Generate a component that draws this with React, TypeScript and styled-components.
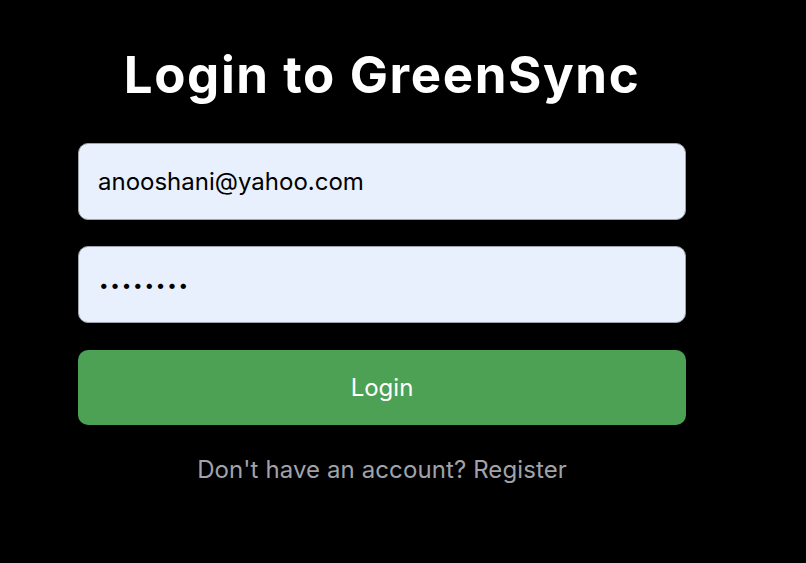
import React from 'react';
import styled, { createGlobalStyle } from 'styled-components';

const GlobalStyle = createGlobalStyle`
    html, body {
        margin: 0;
        padding: 0;
        background-color: #000000;
    }

    body {
        font-family: Inter, 'Liberation Sans', Arial, sans-serif;
    }
`;

const Page = styled.div`
    width: 806px;
    height: 563px;
    box-sizing: border-box;
    padding: 44px 0 0 78px;
    background-color: #000000;
`;

const Form = styled.form`
    width: 608px;
    display: flex;
    flex-direction: column;
    align-items: stretch;
`;

const Title = styled.h1`
    margin: 0 0 37px 0;
    text-align: center;
    color: #ffffff;
    font-size: 51px;
    font-weight: 700;
    line-height: 62px;
    letter-spacing: 1.6px;
`;

const Field = styled.input`
    height: 77px;
    margin-bottom: 26px;
    padding: 0 19px;
    box-sizing: border-box;
    border: 1px solid #9ea3ab;
    border-radius: 10px;
    background-color: #e8f0fe;
    color: #000000;
    font-family: inherit;
    font-size: 24px;
    outline: none;

    &[type='password'] {
        padding-left: 20px;
        font-size: 17px;
        letter-spacing: 1.8px;
    }
`;

const Submit = styled.button`
    height: 75px;
    margin-top: 1px;
    border: none;
    border-radius: 10px;
    background-color: #4ca154;
    color: #ffffff;
    font-family: inherit;
    font-size: 24px;
    cursor: pointer;
`;

const Footer = styled.p`
    margin: 30px 0 0 0;
    text-align: center;
    color: #a0a3aa;
    font-size: 24px;
    line-height: 30px;
    letter-spacing: 0.1px;
`;

export default function App() {
    return (
        <Page>
            <GlobalStyle />
            <Form onSubmit={(e) => e.preventDefault()}>
                <Title>Login to GreenSync</Title>
                <Field type='email' value='anooshani@yahoo.com' readOnly />
                <Field type='password' value='password' readOnly />
                <Submit type='submit'>Login</Submit>
                <Footer>Don't have an account? Register</Footer>
            </Form>
        </Page>
    );
}
